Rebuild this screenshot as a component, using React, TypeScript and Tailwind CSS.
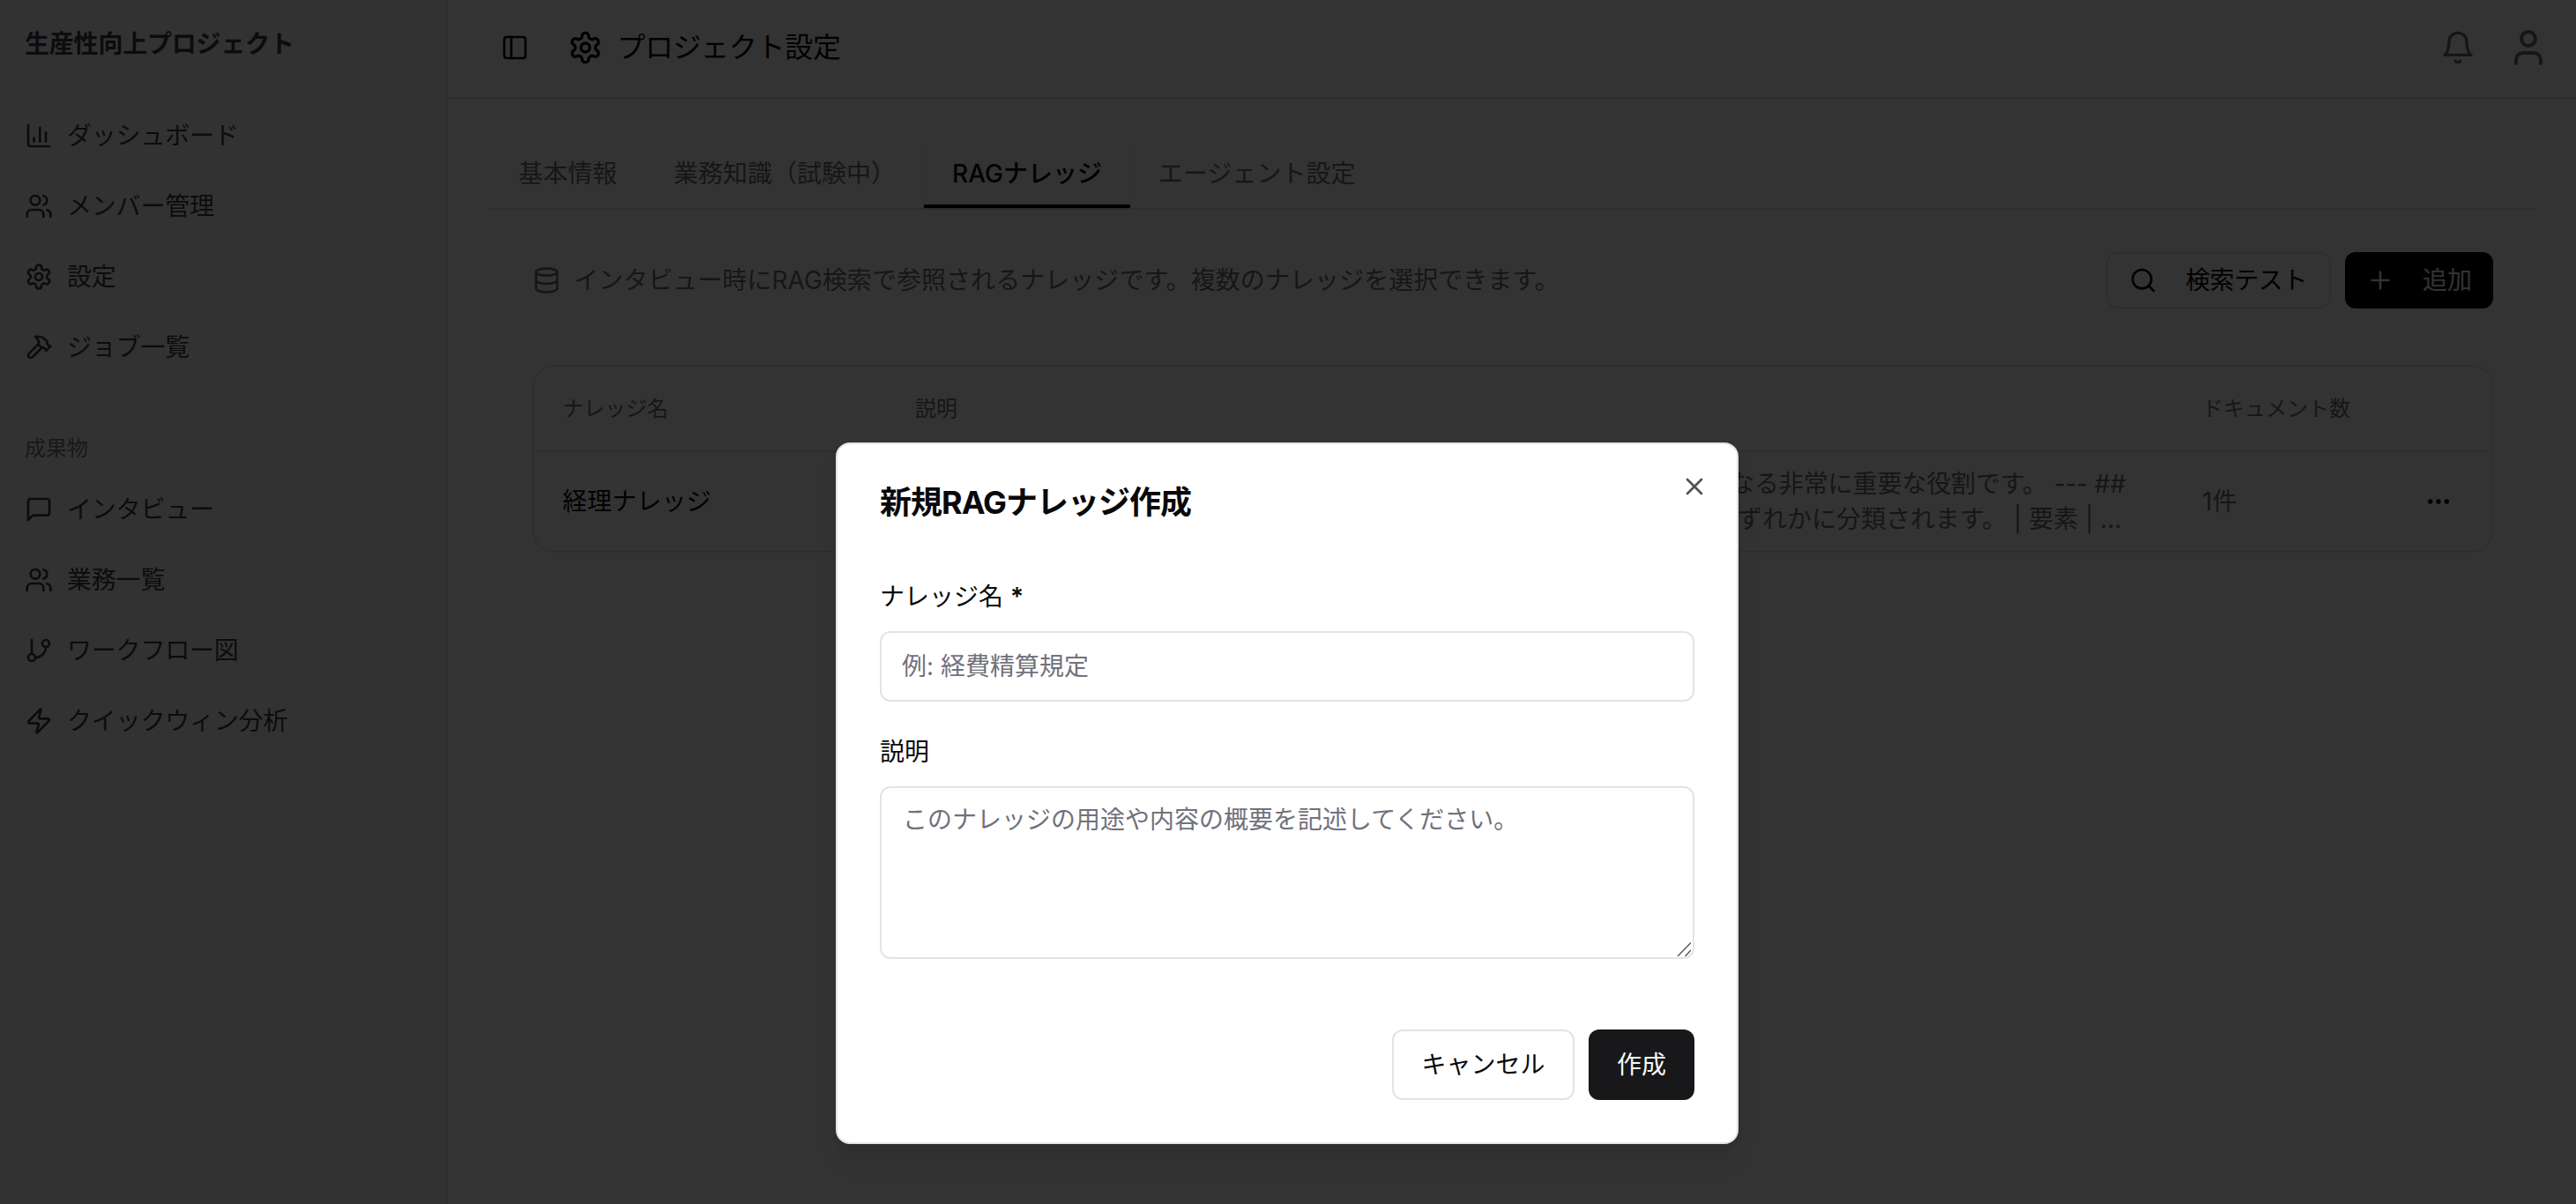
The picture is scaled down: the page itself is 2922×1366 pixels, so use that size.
import React from 'react';
import { ChartColumn, Database, Ellipsis, PanelLeft, Plus, Search, User, Users, X, Zap } from 'lucide-react';

type IconProps = { className?: string };

const SvgIcon: React.FC<IconProps & { children: React.ReactNode }> = ({ className, children }) => (
  <svg
    viewBox="0 0 24 24"
    fill="none"
    stroke="currentColor"
    strokeWidth="2"
    strokeLinecap="round"
    strokeLinejoin="round"
    className={className}
  >
    {children}
  </svg>
);

const GearIcon: React.FC<IconProps> = ({ className }) => (
  <SvgIcon className={className}>
    <path d="M12.22 2h-.44a2 2 0 0 0-2 2v.18a2 2 0 0 1-1 1.73l-.43.25a2 2 0 0 1-2 0l-.15-.08a2 2 0 0 0-2.73.73l-.22.38a2 2 0 0 0 .73 2.73l.15.1a2 2 0 0 1 1 1.72v.51a2 2 0 0 1-1 1.74l-.15.09a2 2 0 0 0-.73 2.73l.22.38a2 2 0 0 0 2.73.73l.15-.08a2 2 0 0 1 2 0l.43.25a2 2 0 0 1 1 1.73V20a2 2 0 0 0 2 2h.44a2 2 0 0 0 2-2v-.18a2 2 0 0 1 1-1.73l.43-.25a2 2 0 0 1 2 0l.15.08a2 2 0 0 0 2.73-.73l.22-.39a2 2 0 0 0-.73-2.73l-.15-.08a2 2 0 0 1-1-1.74v-.5a2 2 0 0 1 1-1.74l.15-.09a2 2 0 0 0 .73-2.73l-.22-.38a2 2 0 0 0-2.73-.73l-.15.08a2 2 0 0 1-2 0l-.43-.25a2 2 0 0 1-1-1.73V4a2 2 0 0 0-2-2z" />
    <circle cx="12" cy="12" r="3" />
  </SvgIcon>
);

const HammerIcon: React.FC<IconProps> = ({ className }) => (
  <SvgIcon className={className}>
    <path d="m15 12-8.373 8.373a1 1 0 1 1-3-3L12 9" />
    <path d="m18 15 4-4" />
    <path d="m21.5 11.5-1.914-1.914A2 2 0 0 1 19 8.172V7l-2.26-2.26a6 6 0 0 0-4.202-1.756L9 2.96l.92.82A6.18 6.18 0 0 1 12 8.4V10l2 2h1.172a2 2 0 0 1 1.414.586L18.5 14.5" />
  </SvgIcon>
);

const ChatIcon: React.FC<IconProps> = ({ className }) => (
  <SvgIcon className={className}>
    <path d="M21 15a2 2 0 0 1-2 2H7l-4 4V5a2 2 0 0 1 2-2h14a2 2 0 0 1 2 2z" />
  </SvgIcon>
);

const BranchIcon: React.FC<IconProps> = ({ className }) => (
  <SvgIcon className={className}>
    <line x1="6" x2="6" y1="3" y2="15" />
    <circle cx="18" cy="6" r="3" />
    <circle cx="6" cy="18" r="3" />
    <path d="M18 9a9 9 0 0 1-9 9" />
  </SvgIcon>
);

const BellIcon: React.FC<IconProps> = ({ className }) => (
  <SvgIcon className={className}>
    <path d="M6 8a6 6 0 0 1 12 0c0 7 3 9 3 9H3s3-2 3-9" />
    <path d="M10.3 21a1.94 1.94 0 0 0 3.4 0" />
  </SvgIcon>
);

const mainMenu = [
  { icon: ChartColumn, label: 'ダッシュボード' },
  { icon: Users, label: 'メンバー管理' },
  { icon: GearIcon, label: '設定' },
  { icon: HammerIcon, label: 'ジョブ一覧' }
];

const outputMenu = [
  { icon: ChatIcon, label: 'インタビュー' },
  { icon: Users, label: '業務一覧' },
  { icon: BranchIcon, label: 'ワークフロー図' },
  { icon: Zap, label: 'クイックウィン分析' }
];

const tabs = ['基本情報', '業務知識（試験中）', 'RAGナレッジ', 'エージェント設定'];

const SidebarMenu: React.FC<{ items: typeof mainMenu }> = ({ items }) => (
  <ul className="flex flex-col gap-4">
    {items.map(({ icon: Icon, label }) => (
      <li key={label} className="flex h-16 items-center gap-4 px-3">
        <Icon className="h-8 w-8 shrink-0" />
        <span className="tracking-[-0.2px]">{label}</span>
      </li>
    ))}
  </ul>
);

const Sidebar: React.FC = () => (
  <aside className="flex w-[508px] shrink-0 flex-col border-r-2 border-gray-200 bg-[#fafafa] px-4 text-zinc-700">
    <div className="flex h-[100px] items-center px-3 font-bold tracking-[-0.2px]">生産性向上プロジェクト</div>
    <div className="mt-[22px]">
      <SidebarMenu items={mainMenu} />
    </div>
    <div className="mt-[51px] flex h-16 items-center px-3 text-2xl text-zinc-700/70">成果物</div>
    <div className="mt-[5px]">
      <SidebarMenu items={outputMenu} />
    </div>
  </aside>
);

const Header: React.FC = () => (
  <header className="flex h-28 items-center justify-between border-b-2 border-zinc-200 pr-[30px] pb-0.5 pl-[60px]">
    <div className="flex items-center">
      <PanelLeft className="h-8 w-8" />
      <GearIcon className="ml-11 h-10 w-10" />
      <h1 className="ml-4 text-[32px] tracking-[-0.3px]">プロジェクト設定</h1>
    </div>
    <div className="flex items-center gap-9 text-zinc-500">
      <BellIcon className="h-10 w-10" />
      <User className="h-12 w-12" />
    </div>
  </header>
);

const KnowledgeTable: React.FC = () => (
  <div className="mt-16 rounded-3xl border-2 border-zinc-200">
    <div className="grid h-[97px] grid-cols-[400px_1460px_1fr] items-center border-b-2 border-zinc-200 text-2xl text-zinc-500">
      <div className="px-8">ナレッジ名</div>
      <div className="px-8">説明</div>
      <div className="px-8">ドキュメント数</div>
    </div>
    <div className="grid h-[112px] grid-cols-[400px_1460px_1fr_76px] items-center">
      <div className="px-8 tracking-[0.1px]">経理ナレッジ</div>
      <div className="overflow-hidden px-8 leading-10 whitespace-nowrap text-zinc-500">
        <p className="pl-[924px] tracking-[-0.1px]">なる非常に重要な役割です。 --- ##</p>
        <p className="pl-[905px]">いずれかに分類されます。 | 要素 | ...</p>
      </div>
      <div className="px-8 text-zinc-500">1件</div>
      <Ellipsis className="h-8 w-8" />
    </div>
  </div>
);

const CreateDialog: React.FC = () => (
  <div className="absolute top-[502px] left-[948px] flex h-[796px] w-[1024px] flex-col rounded-2xl border-2 border-zinc-200 bg-white p-12 shadow-[0_20px_30px_-6px_rgba(0,0,0,0.1),0_8px_12px_-8px_rgba(0,0,0,0.1)]">
    <X className="absolute top-8 right-8 h-8 w-8 opacity-70" />
    <h2 className="text-4xl leading-[36px] font-bold tracking-[-1px]">新規RAGナレッジ作成</h2>
    <div className="mt-[75px] flex flex-col gap-[25px]">
      <label className="leading-7">
        ナレッジ名 <span className="font-semibold">*</span>
      </label>
      <input
        className="h-20 w-full rounded-xl border-2 border-zinc-200 px-[23px] placeholder:text-zinc-500"
        placeholder="例: 経費精算規定"
      />
    </div>
    <div className="mt-[43px] flex flex-col gap-[25px]">
      <label className="leading-7">説明</label>
      <div className="relative h-[196px]">
        <textarea
          className="h-full w-full resize-none rounded-xl border-2 border-zinc-200 px-6 py-4 leading-10 placeholder:text-zinc-500"
          placeholder="このナレッジの用途や内容の概要を記述してください。"
        />
        <svg className="absolute right-1 bottom-[3px] h-4 w-4 text-zinc-600" viewBox="0 0 16 16" stroke="currentColor" strokeWidth="1.4">
          <path d="M1 16 16 0.5M9.5 16 16 9" />
        </svg>
      </div>
    </div>
    <div className="mt-auto flex justify-end gap-4">
      <button className="h-20 w-[207px] rounded-xl border-2 border-zinc-200">キャンセル</button>
      <button className="h-20 w-[120px] rounded-xl bg-zinc-900 text-zinc-50">作成</button>
    </div>
  </div>
);

const App: React.FC = () => (
  <div className="relative flex h-[1366px] w-[2922px] overflow-hidden bg-white font-['Inter','Noto_Sans_CJK_JP',sans-serif] text-[28px] leading-10 text-zinc-950">
    <Sidebar />
    <main className="flex-1">
      <Header />
      <div className="px-12 pr-[46px] pt-[52px]">
        <nav className="flex border-b-2 border-zinc-200">
          {tabs.map((tab) => (
            <div
              key={tab}
              className={
                tab === 'RAGナレッジ'
                  ? 'flex h-[72px] w-[234px] items-center justify-center border-b-4 border-black pb-0.5 font-medium whitespace-nowrap shadow-sm'
                  : 'flex h-[72px] items-center px-8 pb-1.5 text-zinc-500'
              }
            >
              {tab}
            </div>
          ))}
        </nav>
        <div className="px-12 pt-12">
          <div className="flex h-16 items-center justify-between">
            <div className="flex items-center gap-[15px] text-zinc-500">
              <Database className="h-8 w-8" />
              <p className="tracking-[0.05px]">インタビュー時にRAG検索で参照されるナレッジです。複数のナレッジを選択できます。</p>
            </div>
            <div className="flex gap-4">
              <button className="flex h-16 w-[255px] items-center gap-8 rounded-xl border-2 border-zinc-200 px-6 tracking-[-0.4px] whitespace-nowrap">
                <Search className="h-8 w-8 shrink-0" />
                検索テスト
              </button>
              <button className="flex h-16 w-[168px] items-center gap-8 rounded-xl bg-black px-6 whitespace-nowrap text-zinc-50">
                <Plus className="h-8 w-8 shrink-0" />
                追加
              </button>
            </div>
          </div>
          <KnowledgeTable />
        </div>
      </div>
    </main>
    <div className="absolute inset-0 bg-black/80" />
    <CreateDialog />
  </div>
);

export default App;
